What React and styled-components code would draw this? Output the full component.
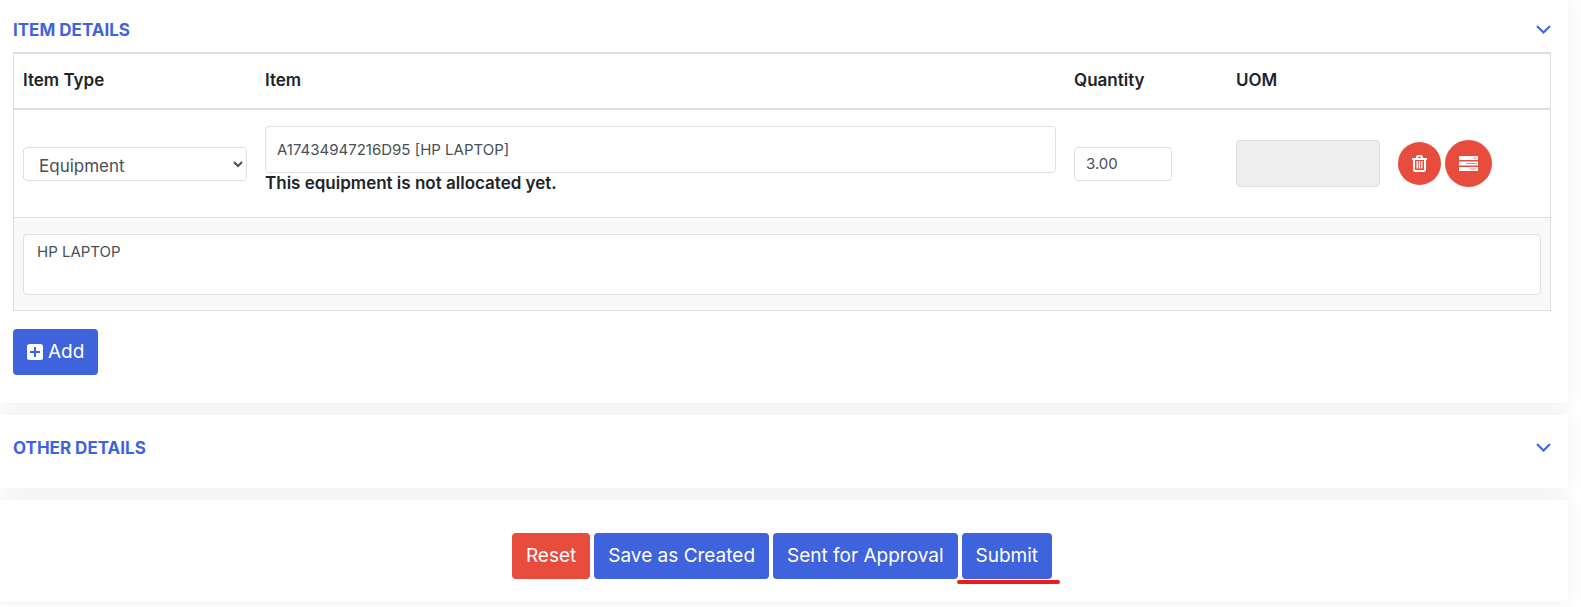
import { useState } from 'react';
import styled, { createGlobalStyle } from 'styled-components';

const ChevronIcon = () => (
  <svg width="15" height="9" viewBox="0 0 15 9" fill="none" aria-hidden="true">
    <path d="M1 1l6.5 6.5L14 1" stroke="currentColor" strokeWidth="2" />
  </svg>
);

const PlusIcon = () => (
  <svg width="16" height="16" viewBox="0 0 16 16" aria-hidden="true">
    <rect width="16" height="16" rx="2.5" fill="currentColor" />
    <path d="M8 3v10M3 8h10" stroke="#3f63dd" strokeWidth="2" />
  </svg>
);

const TrashIcon = () => (
  <svg width="15" height="17" viewBox="0 0 15 17" fill="none" stroke="currentColor" aria-hidden="true">
    <path d="M5 3V2q0-1 1-1h3q1 0 1 1v1" strokeWidth="1.8" />
    <path d="M0 4h15" strokeWidth="2" />
    <path d="M2 4v10.5Q2 16 3.5 16h8q1.5 0 1.5-1.5V4" strokeWidth="2" />
    <path d="M5.2 6v7.5M7.5 6v7.5M9.8 6v7.5" strokeWidth="1.4" />
  </svg>
);

const ServerIcon = () => (
  <svg width="19" height="15" viewBox="0 0 19 15" aria-hidden="true">
    <path d="M0 0h19v4H0zM0 5.5h19v4H0zM0 11h19v4H0z" fill="currentColor" />
    <path d="M14 2h4M7 7.5h11M11 13h6" stroke="#f0897e" strokeWidth="1.2" />
  </svg>
);

const App = () => {
  const [itemType, setItemType] = useState('Equipment');
  const [item, setItem] = useState('A17434947216D95 [HP LAPTOP]');
  const [quantity, setQuantity] = useState('3.00');
  const [description, setDescription] = useState('HP LAPTOP');

  return (
    <Page>
      <GlobalStyle />
      <Card>
        <CardHeader>
          <Title>Item Details</Title>
          <Toggle type="button" aria-label="Toggle item details"><ChevronIcon /></Toggle>
        </CardHeader>
        <Table>
          <colgroup>
            <Col $width="242px" />
            <Col />
            <Col $width="162px" />
            <Col $width="162px" />
            <Col $width="161px" />
          </colgroup>
          <thead>
            <tr>
              <Th>Item Type</Th>
              <Th>Item</Th>
              <Th>Quantity</Th>
              <Th>UOM</Th>
              <Th aria-label="Actions" />
            </tr>
          </thead>
          <tbody>
            <ItemRow>
              <Td>
                <Select aria-label="Item Type" value={itemType} onChange={e => setItemType(e.target.value)}>
                  <option>Equipment</option>
                  <option>Material</option>
                </Select>
              </Td>
              <Td>
                <Input aria-label="Item" $large value={item} onChange={e => setItem(e.target.value)} />
                <Note>This equipment is not allocated yet.</Note>
              </Td>
              <Td>
                <Input aria-label="Quantity" $width="98px" value={quantity} onChange={e => setQuantity(e.target.value)} />
              </Td>
              <Td>
                <Input aria-label="UOM" $large disabled />
              </Td>
              <Td>
                <Actions>
                  <RoundButton type="button" $size={43} aria-label="Delete item"><TrashIcon /></RoundButton>
                  <RoundButton type="button" $size={47} aria-label="Item allocation"><ServerIcon /></RoundButton>
                </Actions>
              </Td>
            </ItemRow>
            <DescriptionRow>
              <Td colSpan={5}>
                <TextArea aria-label="Description" value={description} onChange={e => setDescription(e.target.value)} />
              </Td>
            </DescriptionRow>
          </tbody>
        </Table>
        <Button type="button"><PlusIcon />Add</Button>
      </Card>
      <Card>
        <CardHeader $tall>
          <Title>Other Details</Title>
          <Toggle type="button" aria-label="Toggle other details"><ChevronIcon /></Toggle>
        </CardHeader>
      </Card>
      <Card>
        <Footer>
          <Button type="reset" $color="#e84c3d">Reset</Button>
          <Button type="button">Save as Created</Button>
          <Button type="button">Sent for Approval</Button>
          <Marked><Button type="submit">Submit</Button></Marked>
        </Footer>
      </Card>
    </Page>
  );
}

export default App;

const GlobalStyle = createGlobalStyle`
    *, *::before, *::after {
        box-sizing: border-box;
    }
    body {
        margin: 0;
        background-color: #FFFFFF;
        color: #212529;
        font: 400 15px/24px Inter, "Open Sans", sans-serif;
    }
    button, input, select, textarea {
        font: inherit;
    }
`;

const Page = styled.main`
    display: flex;
    flex-direction: column;
    gap: 12px;
    padding: 0 13px 6px 0;
    overflow: hidden;
`;

const Card = styled.section`
    padding: 0 17px 28px 13px;
    border-radius: 0 4px 4px 0;
    background-color: #FFFFFF;
    box-shadow: 0 0 20px rgba(0, 0, 0, 0.07);
`;

const CardHeader = styled.header`
    display: flex;
    align-items: center;
    justify-content: space-between;
    padding-top: ${({ $tall }) => $tall ? '21px' : '18px'};
    padding-bottom: ${({ $tall }) => $tall ? '0' : '10px'};
`;

const Title = styled.h2`
    margin: 0;
    color: #3f63dd;
    font-size: 17px;
    font-weight: 700;
    line-height: 24px;
    text-transform: uppercase;
`;

const Toggle = styled.button`
    display: flex;
    padding: 0 0 2px;
    border: 0;
    background: none;
    color: #3f63dd;
    cursor: pointer;
`;

const Table = styled.table`
    width: 100%;
    margin-bottom: 18px;
    border: 1px solid #dddddd;
    border-top-width: 2px;
    border-spacing: 0;
    table-layout: fixed;
`;

const Col = styled.col`
    width: ${({ $width }) => $width || 'auto'};
`;

const Th = styled.th`
    height: 56px;
    padding: 0 9px 2px;
    border-bottom: 2px solid #dddddd;
    font-size: 17px;
    font-weight: 600;
    text-align: left;
`;

const Td = styled.td`
    padding: 16px 9px;
    vertical-align: middle;
`;

const ItemRow = styled.tr`
    height: 107px;
`;

const DescriptionRow = styled.tr`
    td {
        padding: 16px 9px 15px;
        border-top: 1px solid #dddddd;
        background-color: #f9f9f9;
    }
`;

const Input = styled.input`
    display: block;
    width: ${({ $width }) => $width || '100%'};
    height: ${({ $large }) => $large ? '47px' : '34px'};
    padding: 0 11px;
    border: 1px solid #dfdfdf;
    border-radius: 4px;
    background-color: #FFFFFF;
    color: #495057;
    &:disabled {
        background-color: #eeeeee;
    }
`;

const Select = styled.select`
    display: block;
    width: 100%;
    height: 34px;
    padding: 4px 0 0 11px;
    border: 1px solid #dfdfdf;
    border-radius: 4px;
    background-color: #FFFFFF;
    color: #495057;
    font-size: 17px;
`;

const TextArea = styled.textarea`
    display: block;
    width: 100%;
    height: 61px;
    padding: 5px 13px;
    border: 1px solid #dfdfdf;
    border-radius: 4px;
    background-color: #FFFFFF;
    color: #495057;
    resize: none;
`;

const Note = styled.strong`
    display: block;
    height: 28px;
    font-size: 17px;
    font-weight: 600;
    line-height: 20px;
`;

const Actions = styled.div`
    display: flex;
    align-items: center;
    gap: 4px;
`;

const RoundButton = styled.button`
    display: flex;
    align-items: center;
    justify-content: center;
    width: ${({ $size }) => $size}px;
    height: ${({ $size }) => $size}px;
    padding: 0;
    border: 0;
    border-radius: 50%;
    background-color: #e84c3d;
    color: #FFFFFF;
    cursor: pointer;
`;

const Button = styled.button`
    display: flex;
    align-items: center;
    gap: 5px;
    height: 46px;
    padding: 0 14px;
    border: 0;
    border-radius: 4px;
    background-color: ${({ $color }) => $color || '#3f63dd'};
    color: #FFFFFF;
    font-size: 19px;
    cursor: pointer;
`;

const Footer = styled.footer`
    display: flex;
    justify-content: center;
    gap: 4px;
    padding-top: 33px;
    margin-bottom: -6px;
`;

const Marked = styled.div`
    position: relative;
    &::after {
        content: '';
        position: absolute;
        top: calc(100% + 1px);
        left: -5px;
        right: -8px;
        height: 4px;
        border-radius: 2px;
        background-color: #ed1c24;
    }
`;
